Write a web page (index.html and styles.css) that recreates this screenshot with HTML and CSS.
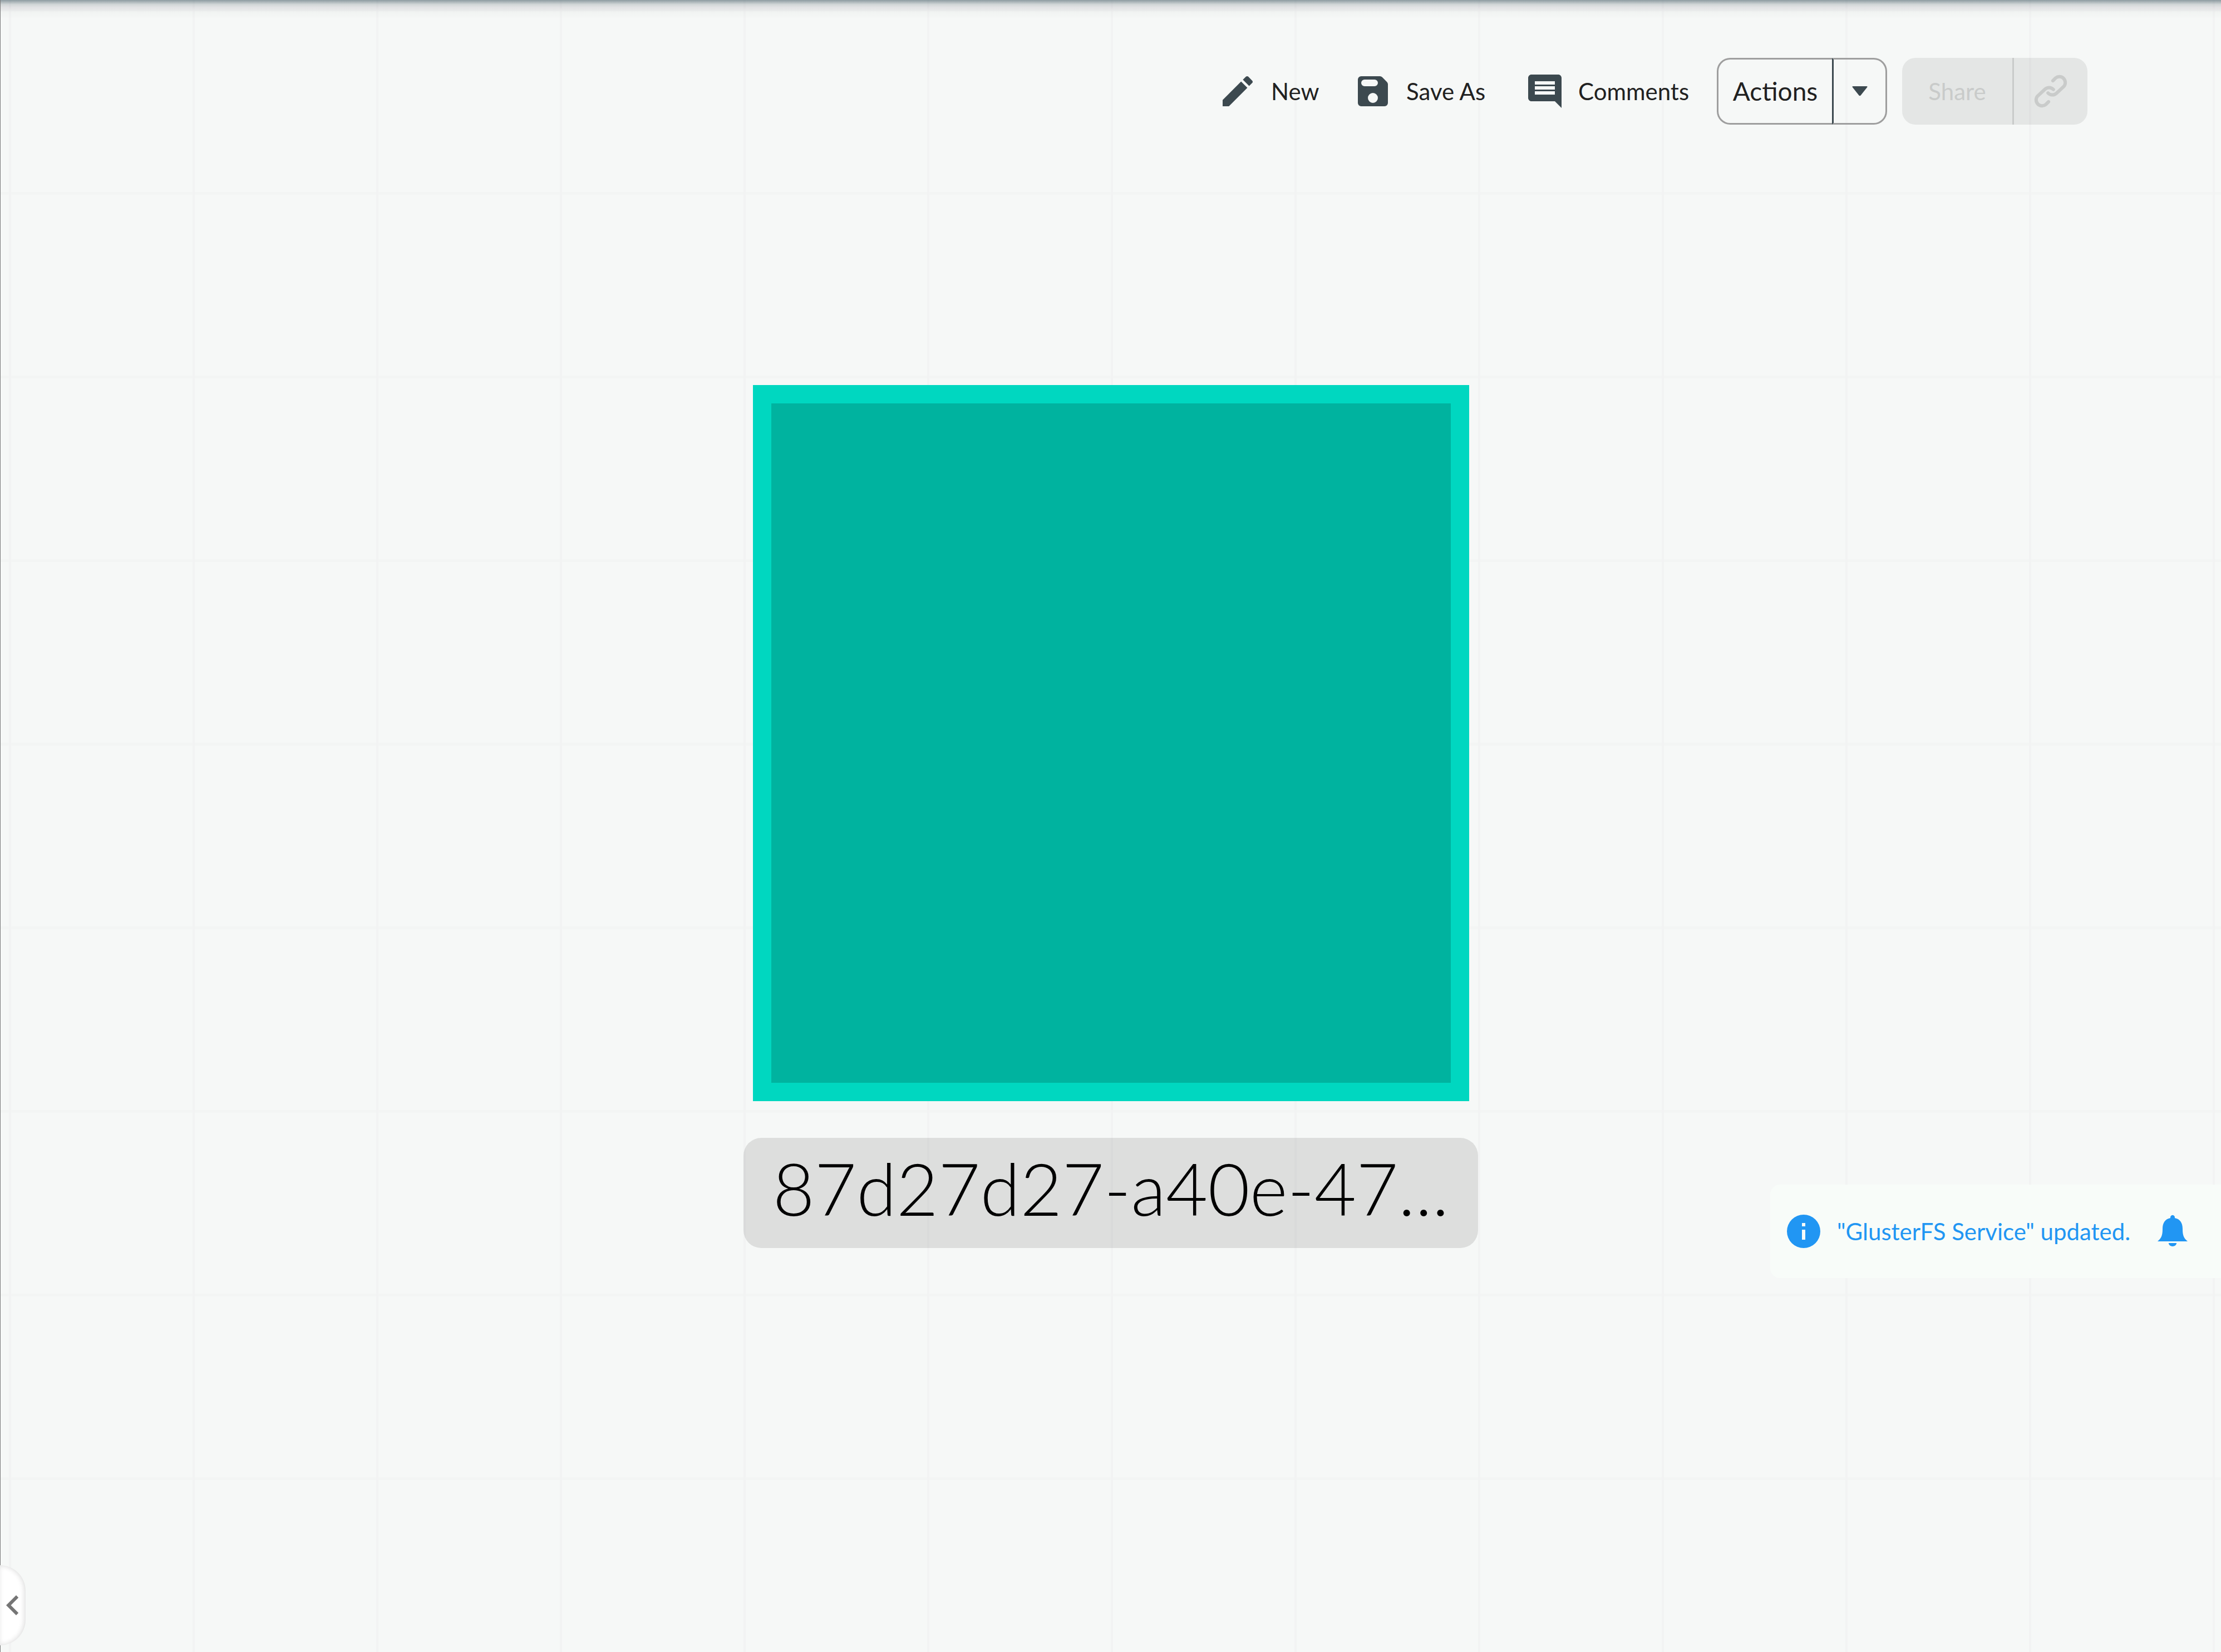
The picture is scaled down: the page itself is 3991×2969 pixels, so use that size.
FILE: index.html
```html
<!DOCTYPE html>
<html lang="en">
<head>
<meta charset="utf-8">
<meta name="viewport" content="width=device-width, initial-scale=1">
<title>Designer</title>
<link rel="stylesheet" href="styles.css">
</head>
<body>
<div class="canvas">
  <header class="toolbar">
    <button class="tool tool-new" type="button">
      <svg class="icon" viewBox="0 0 24 24" aria-hidden="true"><path d="M20.71 7.04c.39-.39.39-1.04 0-1.41l-2.34-2.34c-.37-.39-1.02-.39-1.41 0l-1.84 1.83 3.75 3.75M3 17.25V21h3.75L17.81 9.93l-3.75-3.75L3 17.25z"/></svg>
      <span>New</span>
    </button>
    <button class="tool tool-save" type="button">
      <svg class="icon" viewBox="0 0 24 24" fill-rule="evenodd" aria-hidden="true"><path d="M5 3h11.200a2 2 0 0 1 1.400.600l2.800 2.800a2 2 0 0 1 .600 1.400V19a2 2 0 0 1-2 2H5a2 2 0 0 1-2-2V5a2 2 0 0 1 2-2zM7 5a2 2 0 0 0 0 4h6a2 2 0 0 0 0-4zM12 13a3 3 0 1 0 0 6a3 3 0 0 0 0-6z"/></svg>
      <span>Save As</span>
    </button>
    <button class="tool tool-comments" type="button">
      <svg class="icon" viewBox="0 0 24 24" fill-rule="evenodd" aria-hidden="true"><path d="M22 4c0-1.100-.900-2-2-2H4c-1.100 0-2 .900-2 2v12c0 1.100.900 2 2 2h14l4 4V4zM18 14H6v-2h12v2zM18 11H6V9h12v2zM18 8H6V6h12v2z"/></svg>
      <span>Comments</span>
    </button>
    <div class="split split-outline">
      <button class="split-main" type="button">Actions</button>
      <button class="split-side" type="button" aria-label="More actions">
        <svg class="icon" viewBox="0 0 24 24" aria-hidden="true"><path d="M7.900 9h8.200q.700 0 .300.600L12.500 14.500q-.500.500-1 0L7.600 9.600Q7.200 9 7.900 9z"/></svg>
      </button>
    </div>
    <div class="split split-muted">
      <button class="split-main" type="button" disabled>Share</button>
      <button class="split-side" type="button" aria-label="Copy link" disabled>
        <svg class="icon icon-line" viewBox="0 0 24 24" aria-hidden="true"><path d="M13.300 5.700l1.600-1.600a3.550 3.550 0 0 1 5 5l-4.500 4.150a3.550 3.550 0 0 1-5-.150"/><path d="M10.700 18.300l-1.600 1.600a3.550 3.550 0 0 1-5-5l4.500-4.150a3.550 3.550 0 0 1 5 .150"/></svg>
      </button>
    </div>
  </header>

  <main class="stage">
    <figure class="node">
      <div class="node-shape"></div>
      <figcaption class="node-label">87d27d27-a40e-47...</figcaption>
    </figure>
  </main>

  <div class="toast" role="status">
    <svg class="icon" viewBox="0 0 24 24" aria-hidden="true"><path d="M13 9h-2V7h2m0 10h-2v-6h2m-1-9a10 10 0 1 0 0 20a10 10 0 0 0 0-20z"/></svg>
    <span class="toast-text">"GlusterFS Service" updated.</span>
    <svg class="icon" viewBox="0 0 24 24" aria-hidden="true"><path d="M3 18c2.300-2 3-3.500 3-7.500C6 7 7.500 4.600 10.700 4a1.350 1.350 0 1 1 2.600 0C16.500 4.600 18 7 18 10.500c0 4 .700 5.500 3 7.500zM9.600 19h4.800a2.400 2 0 0 1-4.800 0z"/></svg>
  </div>

  <button class="drawer-tab" type="button" aria-label="Open panel">
    <svg class="icon" viewBox="0 0 24 24" aria-hidden="true"><path d="M15.410 16.580L10.830 12l4.580-4.590L14 6l-6 6 6 6 1.410-1.420z"/></svg>
  </button>
</div>
</body>
</html>
```
FILE: styles.css
```css
* {
  box-sizing: border-box;
}

body {
  margin: 0;
  font-family: Lato, "Open Sans", sans-serif;
  color: #212121;
}

button {
  margin: 0;
  padding: 0;
  border: 0;
  background: none;
  font: inherit;
  color: inherit;
}

.icon {
  flex: none;
  width: 72px;
  height: 72px;
  fill: currentColor;
}

.icon-line {
  fill: none;
  stroke: currentColor;
  stroke-width: 2;
  stroke-linecap: round;
}

.canvas {
  position: relative;
  min-height: 100vh;
  border-left: 1px solid #7b7b7b;
  background-color: #f6f8f7;
  background-image:
    linear-gradient(rgba(96, 116, 124, 0.7), rgba(150, 160, 165, 0.38) 8px, rgba(170, 165, 175, 0.24) 14px, rgba(220, 225, 222, 0.2) 22px, transparent 34px),
    linear-gradient(90deg, #f2f3f3 4px, transparent 4px),
    linear-gradient(#f3f5f4 5px, transparent 5px);
  background-size: 100% 34px, 330px 330px, 330px 330px;
  background-position: 0 0, 15px 0, 0 15px;
  background-repeat: no-repeat, repeat, repeat;
}

/* Toolbar */

.toolbar {
  display: flex;
  justify-content: flex-end;
  padding: 104px 240px 0 0;
  font-size: 42px;
  line-height: 60px;
}

.tool {
  display: flex;
  align-items: center;
  gap: 24px;
  height: 120px;
  white-space: nowrap;
}

.tool .icon,
.split .icon {
  color: #3c494f;
}

.tool-new {
  width: 243px;
}

.tool-save {
  width: 309px;
}

.tool-comments {
  width: 345px;
}

.split {
  display: flex;
  height: 120px;
  border-radius: 24px;
}

.split-main,
.split-side {
  display: flex;
  align-items: center;
  justify-content: center;
}

.split-outline {
  width: 306px;
  margin-right: 27px;
  font-size: 46px;
}

.split-outline .split-main {
  flex: 1;
  border: 3px solid #9e9e9e;
  border-right: 0;
  border-radius: 24px 0 0 24px;
}

.split-outline .split-side {
  width: 99px;
  border: 3px solid #9e9e9e;
  border-left-color: #3c494f;
  border-radius: 0 24px 24px 0;
}

.split-muted {
  width: 333px;
  background: rgba(0, 0, 0, 0.07);
  color: #c9cbca;
}

.split-muted .split-main {
  flex: 1;
}

.split-muted .split-side {
  width: 135px;
  border-left: 3px solid #c9cbca;
}

.split-muted .icon {
  color: #c9cbca;
}

/* Diagram node */

.stage {
  display: flex;
  justify-content: center;
  padding-top: 468px;
}

.node {
  display: flex;
  flex-direction: column;
  align-items: center;
  gap: 66px;
  width: 1320px;
  margin: 0;
}

.node-shape {
  width: 1287px;
  aspect-ratio: 1;
  border: 33px solid #00d7c0;
  background: #00b39f;
}

.node-label {
  width: 100%;
  height: 198px;
  border-radius: 32px;
  background: rgba(0, 0, 0, 0.1);
  color: #000;
  font-size: 130px;
  font-weight: 300;
  line-height: 180px;
  text-align: center;
  white-space: nowrap;
}

/* Notification */

.toast {
  position: absolute;
  right: 0;
  bottom: 672px;
  display: flex;
  align-items: center;
  gap: 24px;
  width: 810px;
  height: 168px;
  padding: 0 51px 0 24px;
  border-radius: 18px 0 0 18px;
  background: #f8fcf9;
  color: #2196f3;
  font-size: 42px;
  line-height: 60px;
}

.toast-text {
  flex: 1;
  white-space: nowrap;
}

/* Side panel handle */

.drawer-tab {
  position: absolute;
  left: -1px;
  bottom: 12px;
  display: flex;
  align-items: center;
  justify-content: center;
  width: 46px;
  height: 144px;
  border-radius: 0 46px 46px 0;
  background: #fff;
  box-shadow: inset -2px 0 10px rgba(0, 0, 0, 0.14);
  color: #757575;
  overflow: hidden;
}
```
